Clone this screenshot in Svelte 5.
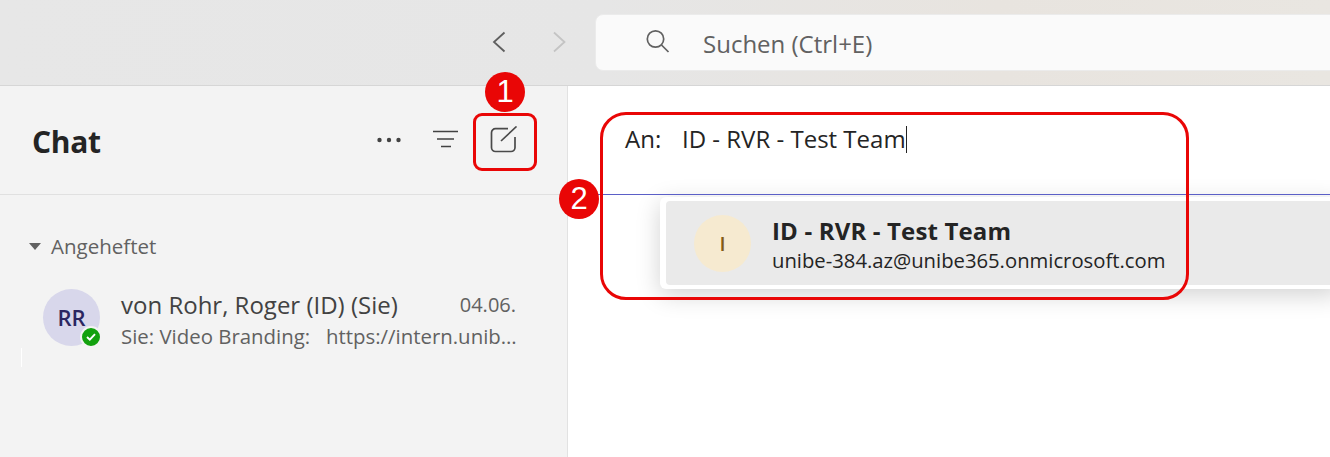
<script>
	const chat = {
		initials: 'RR',
		name: 'von Rohr, Roger (ID) (Sie)',
		date: '04.06.',
		preview: 'Sie: Video Branding:   https://intern.unib…'
	};
</script>

<div class="app">
	<header class="topbar">
		<button class="nav" aria-label="Zurück">
			<svg width="20" height="24" viewBox="0 0 20 24" fill="none" stroke="#5f5f5f" stroke-width="1.8"><path d="M14.5 2.5 L4 12 L14.5 21.5" /></svg>
		</button>
		<button class="nav" aria-label="Vor">
			<svg width="20" height="24" viewBox="0 0 20 24" fill="none" stroke="#c4c4c4" stroke-width="1.8"><path d="M4 2.5 L14.5 12 L4 21.5" /></svg>
		</button>
		<div class="search">
			<svg width="24" height="24" viewBox="0 0 24 24" fill="none" stroke="#616161" stroke-width="1.7"><circle cx="9.5" cy="10" r="8.2" /><path d="M15.5 16 L22.5 23" /></svg>
			<span>Suchen (Ctrl+E)</span>
		</div>
	</header>

	<div class="body">
		<aside class="sidebar">
			<div class="side-head">
				<h1>Chat</h1>
				<div class="tools">
					<svg width="26" height="8" viewBox="0 0 26 8" fill="#424242"><circle cx="3.5" cy="4" r="2.2" /><circle cx="13" cy="4" r="2.2" /><circle cx="22.5" cy="4" r="2.2" /></svg>
					<svg width="26" height="20" viewBox="0 0 26 20" fill="none" stroke="#424242" stroke-width="1.6"><path d="M0 1.5 H25 M4 9 H21 M8 16.5 H18" /></svg>
					<svg width="28" height="28" viewBox="0 0 28 28" fill="none" stroke="#4a4a4a" stroke-width="1.7"><path d="M18 2.7 H5.5 a4 4 0 0 0 -4 4 V21.5 a4 4 0 0 0 4 4 H21 a4 4 0 0 0 4 -4 V11" /><path d="M11 15 L26.5 0.5" /></svg>
				</div>
			</div>
			<div class="pinned">
				<span class="caret"></span>
				<span>Angeheftet</span>
			</div>
			<div class="chat-row">
				<div class="avatar">
					{chat.initials}
					<span class="status">
						<svg width="10" height="8" viewBox="0 0 10 8" fill="none" stroke="#fff" stroke-width="1.9"><path d="M1 4 L3.8 6.6 L9 1.2" /></svg>
					</span>
				</div>
				<div class="chat-text">
					<div class="chat-top">
						<span class="chat-name">{chat.name}</span>
						<span class="chat-date">{chat.date}</span>
					</div>
					<div class="chat-preview">{chat.preview}</div>
				</div>
			</div>
			<span class="sliver"></span>
		</aside>

		<main class="main">
			<div class="to-row">
				<span class="to-label">An:</span>
				<span class="to-value">ID - RVR - Test Team</span>
				<span class="cursor"></span>
			</div>
			<div class="suggestions">
				<div class="suggestion">
					<div class="sug-avatar">I</div>
					<div class="sug-text">
						<div class="sug-name">ID - RVR - Test Team</div>
						<div class="sug-mail">unibe-384.az@unibe365.onmicrosoft.com</div>
					</div>
				</div>
			</div>
		</main>
	</div>

	<!-- red annotations drawn over the screenshot -->
	<div class="mark box-one"></div>
	<div class="mark box-two"></div>
	<div class="badge badge-one">1</div>
	<div class="badge badge-two">2</div>
</div>

<style>
	:global(body) {
		margin: 0;
	}
	.app {
		position: relative;
		width: 1330px;
		height: 457px;
		overflow: hidden;
		display: flex;
		flex-direction: column;
		font-family: "Open Sans", "Noto Sans", sans-serif;
		color: #242424;
		background: #fff;
	}
	.topbar {
		height: 86px;
		flex: none;
		box-sizing: border-box;
		display: flex;
		align-items: flex-start;
		padding: 14px 0 0 490px;
		background: linear-gradient(90deg, #e7e7e7 0%, #e6e6e6 45%, #e8e4df 75%, #e9e6e1 100%);
		border-bottom: 1px solid #d6d6d6;
	}
	.nav {
		width: 20px;
		height: 24px;
		padding: 0;
		margin: 16px 0 0;
		border: 0;
		background: none;
	}
	.nav + .nav {
		margin-left: 40px;
	}
	.search {
		flex: 1;
		height: 57px;
		margin-left: 25px;
		margin-right: -12px;
		box-sizing: border-box;
		display: flex;
		align-items: center;
		gap: 33px;
		padding: 2px 0 0 50px;
		background: #fafafa;
		border: 1px solid #ebebeb;
		border-radius: 8px;
		font-size: 24px;
		color: #616161;
	}
	.search svg {
		margin-top: -6px;
	}
	.body {
		flex: 1;
		display: flex;
		min-height: 0;
	}
	.sidebar {
		position: relative;
		width: 568px;
		flex: none;
		box-sizing: border-box;
		background: #f3f3f3;
		border-right: 1px solid #e2e2e2;
	}
	.side-head {
		height: 109px;
		box-sizing: border-box;
		display: flex;
		align-items: center;
		justify-content: space-between;
		padding: 0 49px 0 32px;
		border-bottom: 1px solid #e0e0e0;
	}
	h1 {
		margin: 2px 0 0;
		font-size: 30px;
		font-weight: 700;
		letter-spacing: -0.3px;
	}
	.tools {
		display: flex;
		align-items: center;
		gap: 31px;
	}
	.pinned {
		display: flex;
		align-items: center;
		gap: 10px;
		margin: 38px 0 0 29px;
		height: 26px;
		font-size: 20.5px;
		color: #616161;
	}
	.caret {
		width: 0;
		height: 0;
		border-left: 6px solid transparent;
		border-right: 6px solid transparent;
		border-top: 7px solid #616161;
	}
	.chat-row {
		display: flex;
		gap: 21px;
		margin: 30px 0 0 43px;
		width: 473px;
	}
	.avatar {
		position: relative;
		width: 57px;
		height: 57px;
		flex: none;
		border-radius: 50%;
		background: #d8d7eb;
		color: #2b2661;
		font-size: 22px;
		font-weight: 600;
		line-height: 57px;
		text-align: center;
	}
	.status {
		position: absolute;
		right: -2px;
		bottom: -2px;
		width: 18px;
		height: 18px;
		display: flex;
		align-items: center;
		justify-content: center;
		border-radius: 50%;
		background: #13a10e;
		border: 2px solid #f3f3f3;
	}
	.chat-text {
		flex: 1;
		min-width: 0;
		margin-top: -1px;
	}
	.chat-top {
		display: flex;
		align-items: center;
		justify-content: space-between;
		height: 32px;
	}
	.chat-name {
		font-size: 24px;
		color: #424242;
	}
	.chat-date {
		font-size: 20px;
		color: #616161;
	}
	.chat-preview {
		margin-top: 2px;
		font-size: 20.4px;
		color: #616161;
		white-space: pre;
	}
	.sliver {
		position: absolute;
		left: 21px;
		top: 262px;
		width: 1px;
		height: 19px;
		background: #fff;
	}
	.main {
		flex: 1;
		min-width: 0;
	}
	.to-row {
		position: relative;
		z-index: 1;
		height: 109px;
		box-sizing: border-box;
		display: flex;
		align-items: flex-start;
		padding: 35px 0 0 57px;
		border-bottom: 1px solid #5b5fc7;
		font-size: 24px;
		line-height: 36px;
	}
	.to-label {
		width: 57px;
	}
	.cursor {
		width: 1px;
		height: 27px;
		margin-top: 5px;
		background: #242424;
	}
	.suggestions {
		margin: 2px -10px 0 92px;
		padding: 4px 6px;
		background: #fff;
		border-radius: 6px;
		box-shadow: 0 6px 24px rgba(0, 0, 0, 0.18);
	}
	.suggestion {
		height: 84px;
		display: flex;
		align-items: center;
		gap: 21px;
		padding-left: 28px;
		background: #eaeaea;
		border-radius: 4px;
	}
	.sug-avatar {
		width: 57px;
		height: 57px;
		flex: none;
		border-radius: 50%;
		background: #f6ead0;
		color: #835b15;
		font-size: 20px;
		font-weight: 600;
		line-height: 57px;
		text-align: center;
	}
	.sug-text {
		padding-top: 2px;
	}
	.sug-name {
		font-size: 24px;
		font-weight: 700;
		letter-spacing: 0.15px;
		line-height: 32px;
	}
	.sug-mail {
		font-size: 20.25px;
		line-height: 27px;
	}
	.mark {
		position: absolute;
		z-index: 2;
		box-sizing: border-box;
		border: 3px solid #e90606;
	}
	.box-one {
		left: 473px;
		top: 113px;
		width: 64px;
		height: 58px;
		border-radius: 9px;
	}
	.box-two {
		left: 600px;
		top: 112px;
		width: 589px;
		height: 188px;
		border-radius: 26px;
	}
	.badge {
		position: absolute;
		z-index: 3;
		width: 40px;
		height: 40px;
		border-radius: 50%;
		background: #e90606;
		color: #fff;
		font-family: "Liberation Sans", sans-serif;
		font-size: 31px;
		line-height: 40px;
		text-align: center;
	}
	.badge-one {
		left: 485px;
		top: 72px;
	}
	.badge-two {
		left: 559px;
		top: 179px;
	}
</style>
